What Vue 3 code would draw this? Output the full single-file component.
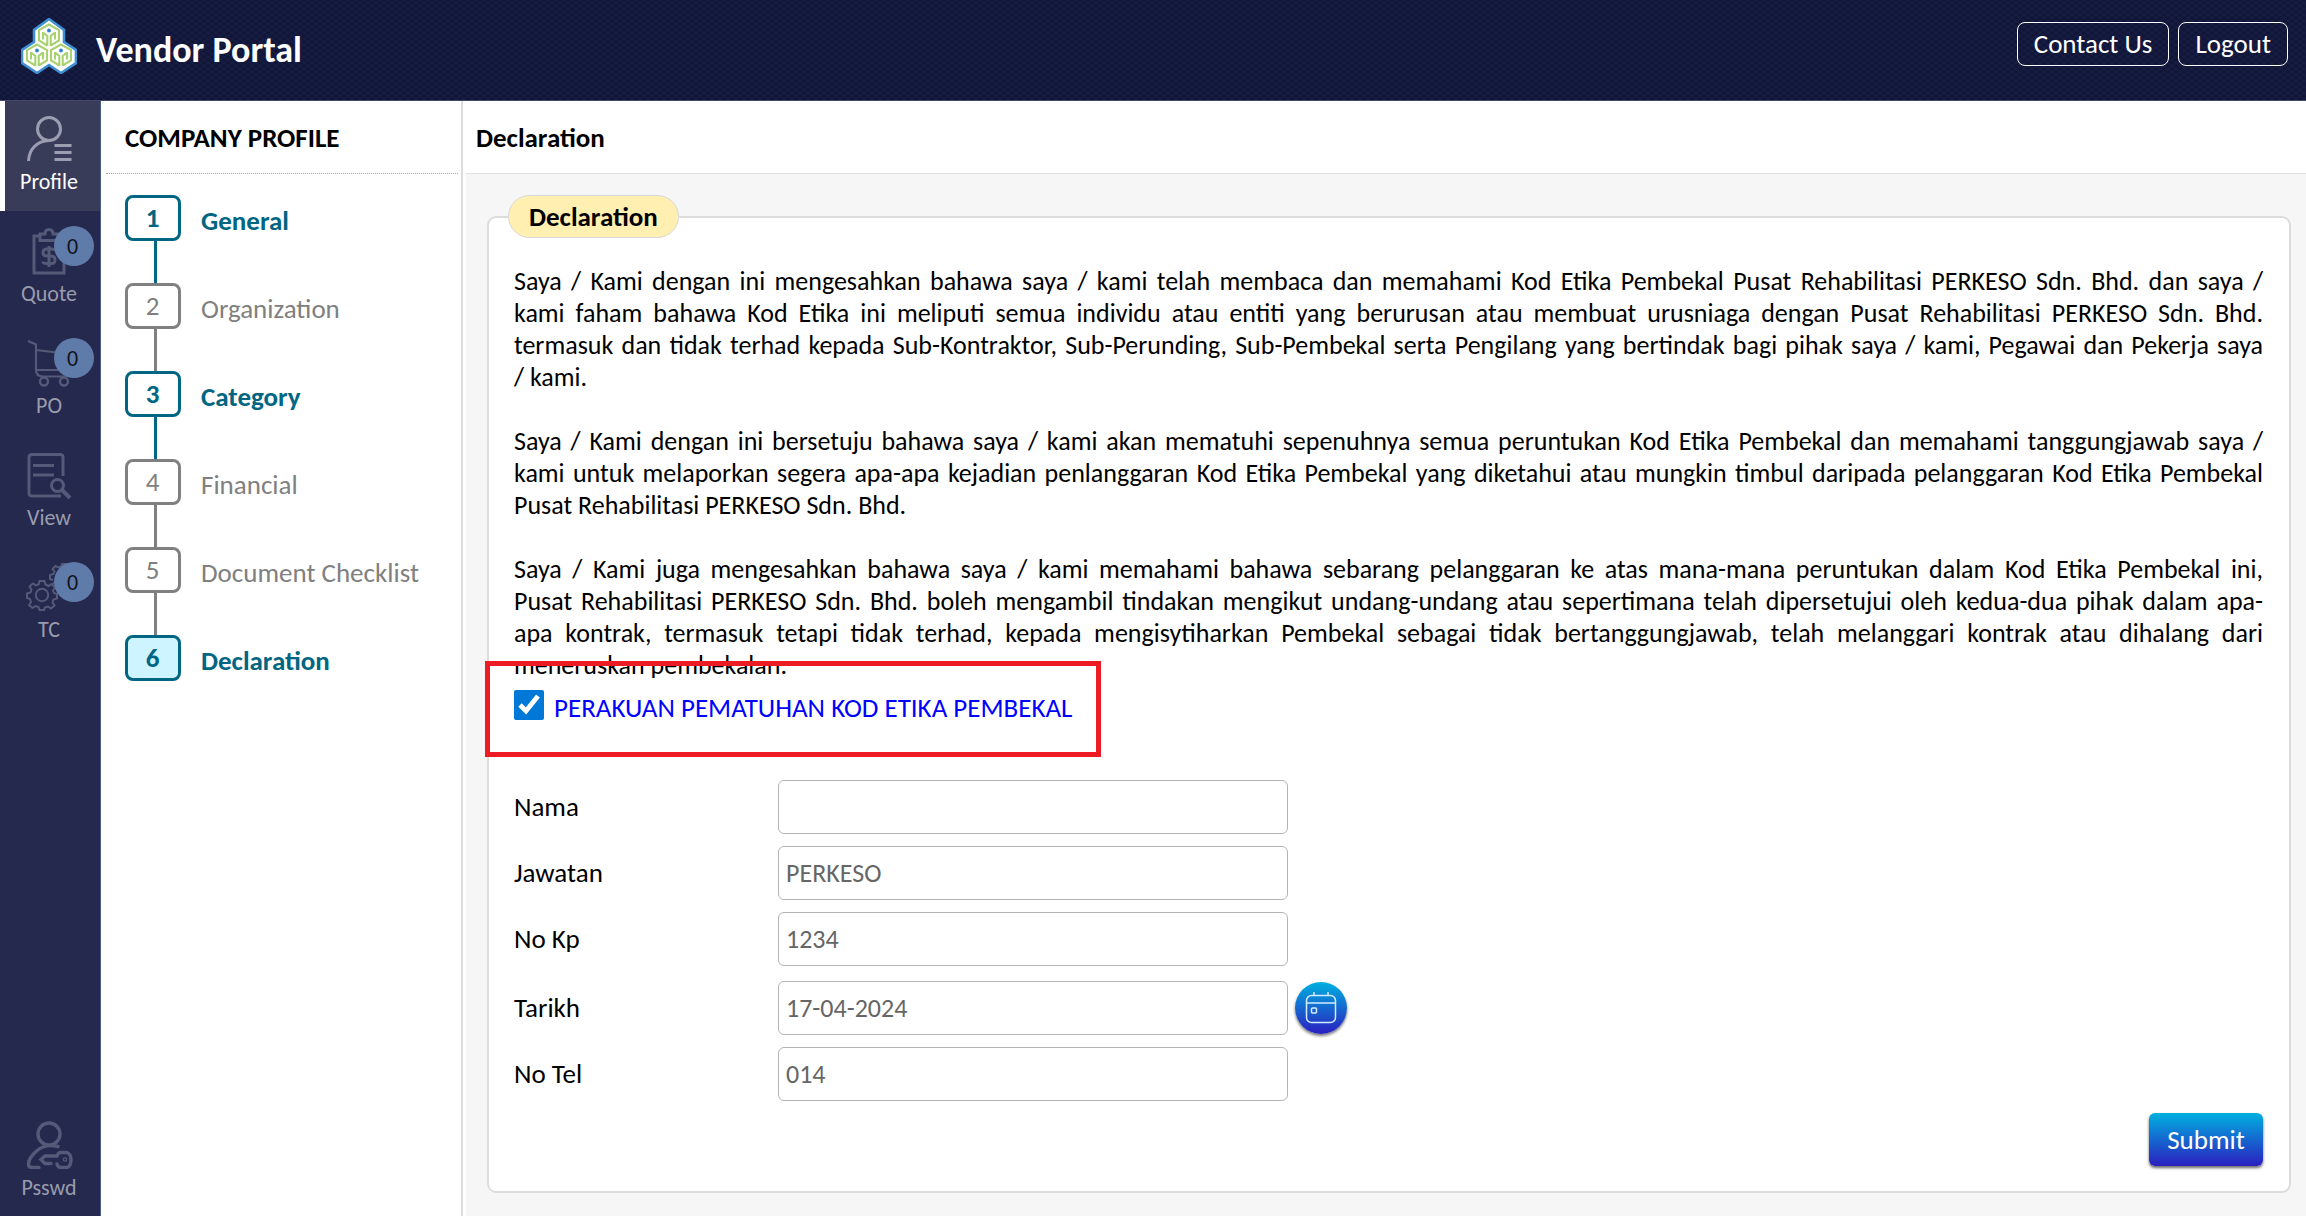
<script setup>
import { ref } from 'vue'

const navItems = [
  { id: 'profile', label: 'Profile', active: true },
  { id: 'quote', label: 'Quote', badge: 0 },
  { id: 'po', label: 'PO', badge: 0 },
  { id: 'view', label: 'View' },
  { id: 'tc', label: 'TC', badge: 0 }
]

const steps = [
  { n: 1, label: 'General', state: 'done' },
  { n: 2, label: 'Organization', state: '' },
  { n: 3, label: 'Category', state: 'done' },
  { n: 4, label: 'Financial', state: '' },
  { n: 5, label: 'Document Checklist', state: '' },
  { n: 6, label: 'Declaration', state: 'done current' }
]

// \u00a0 keeps word pairs together when the text wraps
const paragraphs = [
  'Saya / Kami dengan ini mengesahkan bahawa saya / kami telah membaca dan memahami Kod Etika Pembekal Pusat Rehabilitasi PERKESO Sdn. Bhd. dan saya / kami\u00a0faham bahawa Kod Etika ini meliputi semua individu atau entiti yang berurusan atau membuat urusniaga dengan Pusat Rehabilitasi PERKESO Sdn. Bhd. termasuk\u00a0dan tidak terhad kepada Sub-Kontraktor, Sub-Perunding, Sub-Pembekal serta Pengilang yang bertindak bagi pihak saya / kami, Pegawai dan Pekerja saya /\u00a0kami.',
  'Saya / Kami dengan ini bersetuju bahawa saya / kami akan mematuhi sepenuhnya semua peruntukan Kod Etika Pembekal dan memahami tanggungjawab saya / kami\u00a0untuk melaporkan segera apa-apa kejadian penlanggaran Kod Etika Pembekal yang diketahui atau mungkin timbul daripada pelanggaran Kod Etika Pembekal Pusat\u00a0Rehabilitasi PERKESO Sdn. Bhd.',
  'Saya / Kami juga mengesahkan bahawa saya / kami memahami bahawa sebarang pelanggaran ke atas mana-mana peruntukan dalam Kod Etika Pembekal ini, Pusat\u00a0Rehabilitasi PERKESO Sdn. Bhd. boleh mengambil tindakan mengikut undang-undang atau sepertimana telah dipersetujui oleh kedua-dua pihak dalam apa-apa\u00a0kontrak, termasuk tetapi tidak terhad, kepada mengisytiharkan Pembekal sebagai tidak bertanggungjawab, telah melanggari kontrak atau dihalang dari meneruskan\u00a0pembekalan.'
]

const agreed = ref(true)
const fields = ref([
  { id: 'nama', label: 'Nama', value: '' },
  { id: 'jawatan', label: 'Jawatan', value: 'PERKESO' },
  { id: 'nokp', label: 'No Kp', value: '1234' },
  { id: 'tarikh', label: 'Tarikh', value: '17-04-2024', date: true },
  { id: 'notel', label: 'No Tel', value: '014' }
])
</script>

<template>
  <div class="app">
    <header class="topbar">
      <svg class="logo" viewBox="0 0 56 56" aria-hidden="true">
        <path d="M28 1 43 12V24L55 32V45L40 55 28 47 16 55 1 45V32L13 24V12Z" fill="#fff" stroke="#3f90d2" stroke-width="2.6" />
        <g v-for="(p, i) in [[28, 17], [16, 37], [40, 37]]" :key="i" :transform="`translate(${p[0]} ${p[1]})`" fill="none" stroke="#a9d170" stroke-width="2.1">
          <path d="M-1.7 11V1L-6 -2.5M1.7 11V1L6 -2.5M-1.7 10.5-10 5.5V-5L0 -10.5 10 -5V5.5L1.7 10.5M-6 -3V4.5M6 -3V4.5" />
          <circle cy="-4.5" r="1.9" fill="#2f86cc" stroke="none" />
        </g>
      </svg>
      <h1>Vendor Portal</h1>
      <button type="button" class="outline">Contact Us</button>
      <button type="button" class="outline">Logout</button>
    </header>

    <div class="body">
      <nav class="rail">
        <a v-for="item in navItems" :key="item.id" href="#" class="rail-item" :class="{ active: item.active }">
          <svg viewBox="0 0 48 48" fill="none" stroke="currentColor" stroke-width="3">
            <template v-if="item.id === 'profile'">
              <circle cx="24" cy="14" r="11.5" />
              <path d="M3.500 46C4 34 12 26 24 25.500M29.500 30.500H46.500M29.500 37.500H46.500M29.500 44.500H46.500" />
            </template>
            <template v-else-if="item.id === 'quote'">
              <path d="M14 9H9V46H39V9H34M15 13.500V7H20Q20 2.500 24 2.500T28 7H33V13.500Z" />
              <path d="M30 24Q30 22 26 22H22Q18 22 18 25.500T22 29H26Q30 29 30 33T26 36.500H22Q18 36.500 18 34.500M24 19V40" />
            </template>
            <template v-else-if="item.id === 'po'">
              <path d="M3 2 11 5.500V31Q11 37.500 18 37.500H42M11 11 44 15 41 31H11" stroke-width="2.200" />
              <circle cx="19" cy="42.500" r="4" stroke-width="2.400" />
              <circle cx="39" cy="42.500" r="4" stroke-width="2.400" />
            </template>
            <template v-else-if="item.id === 'view'">
              <path d="M38 25V6Q38 3.500 35 3.500H7Q4 3.500 4 6.500V42Q4 45 7 45H36M8 14.500H29M8 24H29" />
              <circle cx="32.500" cy="34.500" r="6" />
              <path d="M37 39 45 47" stroke-width="4" />
            </template>
            <template v-else>
              <g stroke-width="2">
                <circle cx="17" cy="32" r="6.200" />
                <path d="M14.500 18H19.500L20.500 21.500 23.500 23 26.500 21 30 24.500 28 27.500 29 30 32 31V35.500L28.500 36.500 27.500 39.500 29.500 42.500 26 45.500 23 43.500 20 44.500 19 47H14.500L13.500 44 10.500 43 7.500 45 4 42 6 39 5 36 2 35V30.500L5.500 29.500 6.500 26.500 4.500 23.500 8 20.500 11 22.500 13.500 21.500Z" />
                <path d="M31 24 33 22M28 17 25 16V12L28.500 11 29.500 8.500 27.500 6 30.500 3 33.500 4.500 36 3.500 37 1H41L42 4M30 19 28 21M34 8Q30 14 34 19" />
              </g>
            </template>
          </svg>
          <span>{{ item.label }}</span>
          <b v-if="item.badge !== undefined" class="badge">{{ item.badge }}</b>
        </a>
        <a href="#" class="rail-item last">
          <svg viewBox="0 0 48 48" fill="none" stroke="currentColor" stroke-width="3.400" stroke-linecap="round">
            <circle cx="24" cy="13" r="11" />
            <path d="M33 25.500Q20 22.500 11.500 30 3.500 37 3.500 43 3.500 46.500 7 46.500H14" />
            <path d="M26 42.500H20L16 38.500 20 35H32Q33 31.500 36 31.500H42Q46 33 46 39T42 46.500H36Q33 46.500 32 43" />
            <circle cx="40" cy="38.500" r="0.600" />
          </svg>
          <span>Psswd</span>
        </a>
      </nav>

      <aside class="panel">
        <h2>COMPANY PROFILE</h2>
        <ol class="steps">
          <li v-for="s in steps" :key="s.n" :class="s.state">
            <span class="num">{{ s.n }}</span>
            <a href="#">{{ s.label }}</a>
          </li>
        </ol>
      </aside>

      <main class="content">
        <h2>Declaration</h2>
        <form @submit.prevent>
          <fieldset>
            <legend>Declaration</legend>
            <p v-for="(p, i) in paragraphs" :key="i">{{ p }}</p>
            <div class="agree">
              <input id="agree" v-model="agreed" type="checkbox" />
              <label for="agree">PERAKUAN PEMATUHAN KOD ETIKA PEMBEKAL</label>
              <div class="highlight"></div>
            </div>
            <div v-for="f in fields" :key="f.id" class="field" :class="{ date: f.date }">
              <label :for="f.id">{{ f.label }}</label>
              <input :id="f.id" v-model="f.value" type="text" />
              <button v-if="f.date" type="button" class="calendar" aria-label="Pilih tarikh">
                <svg viewBox="0 0 32 32" fill="none" stroke="#d3ecff" stroke-width="1.500">
                  <rect x="1.500" y="3.500" width="29" height="27" rx="5" />
                  <path d="M1.500 11H30.500M9 0V4M23 0V4" />
                  <rect x="6.500" y="16" width="5" height="5" rx="1" />
                </svg>
              </button>
            </div>
            <div class="actions">
              <button type="submit" class="submit">Submit</button>
            </div>
          </fieldset>
        </form>
      </main>
    </div>
  </div>
</template>

<style>
body {
  background: #f6f6f6;
}
</style>

<style scoped>
* {
  box-sizing: border-box;
}
.app {
  min-height: 100vh;
  display: flex;
  flex-direction: column;
  font-family: Carlito, Calibri, Lato, sans-serif;
  font-size: 27px;
  line-height: 32px;
  color: #000;
}
h1,
h2,
p,
ol {
  margin: 0;
}
a {
  color: inherit;
  text-decoration: none;
}
button,
input {
  font: inherit;
}
.topbar {
  display: flex;
  align-items: flex-start;
  gap: 9px;
  height: 101px;
  padding: 18px 18px 0 21px;
  border-bottom: 1px solid #454868;
  background-color: #191f47;
  background-image: radial-gradient(ellipse at center, #0f1435 10%, transparent 70%), radial-gradient(ellipse at center, #0f1435 10%, transparent 70%);
  background-size: 8px 6px;
  background-position: 0 0, 4px 3px;
  color: #fff;
}
.logo {
  width: 56px;
  height: 56px;
  margin-right: 10px;
}
.topbar h1 {
  flex: 1;
  font-size: 36px;
  line-height: 64px;
}
.outline {
  height: 44px;
  margin-top: 4px;
  padding: 0 16px;
  border: 1px solid #fff;
  border-radius: 8px;
  background: transparent;
  color: #fff;
}
.body {
  flex: 1;
  display: flex;
}
.rail {
  width: 101px;
  display: flex;
  flex-direction: column;
  gap: 2px;
  background: #24294d;
  border-right: 1px solid #4a5f85;
  font-size: 22px;
}
.rail-item {
  position: relative;
  display: flex;
  flex-direction: column;
  align-items: center;
  height: 110px;
  padding: 14px 2px 0 0;
  line-height: 38px;
  color: #9a9cad;
}
.rail-item svg {
  width: 48px;
  height: 48px;
  color: #555a78;
}
.rail-item.active {
  border-left: 5px solid #fff;
  padding-right: 7px;
  background: #393c59;
  color: #fff;
}
.rail-item.active svg {
  color: #9c9db0;
}
.rail-item.last {
  margin-top: auto;
}
.badge {
  position: absolute;
  top: 13px;
  right: 6px;
  width: 40px;
  height: 40px;
  padding-right: 3px;
  border-radius: 50%;
  background: #5f7ba9;
  color: #10131c;
  font-size: 22px;
  font-weight: 400;
  line-height: 42px;
  text-align: center;
}
.panel {
  width: 362px;
  background: #fff;
  border-right: 2px solid #dcdcdc;
}
.panel h2 {
  margin: 0 3px 0 5px;
  padding: 21px 19px 19px;
  border-bottom: 1px dotted #a8a8a8;
  font-size: 27px;
}
.steps {
  padding: 21px 0 0 24px;
  list-style: none;
}
.steps li {
  position: relative;
  display: flex;
  align-items: flex-start;
  gap: 20px;
  height: 88px;
  color: #808080;
}
.steps li:not(:last-child)::after {
  content: '';
  position: absolute;
  top: 46px;
  left: 29px;
  width: 3px;
  height: 42px;
  background: currentColor;
}
.steps a {
  line-height: 52px;
}
.num {
  width: 56px;
  height: 46px;
  padding-right: 1px;
  border: 3px solid currentColor;
  border-radius: 8px;
  line-height: 40px;
  text-align: center;
}
.done {
  font-weight: 700;
}
.steps li.done {
  color: #006682;
}
.current .num {
  background: #cdf4ff;
}
.content {
  flex: 1;
  min-width: 0;
  border-left: 3px solid #fff;
}
.content h2 {
  padding: 21px 10px 19px;
  background: #fff;
  border-bottom: 1px solid #e0e0e0;
  font-size: 27px;
}
form {
  padding: 21px 15px 24px 21px;
}
fieldset {
  margin: 0;
  padding: 27px 26px 25px 25px;
  min-width: 0;
  border: 2px solid #dcdcdc;
  border-radius: 9px;
  background: #fff;
}
legend {
  margin-left: -6px;
  padding: 0 20px;
  border: 1px solid #d8d8d8;
  border-radius: 22px;
  background: #ffefb0;
  font-weight: 700;
  line-height: 41px;
}
p {
  font-size: 26px;
  text-align: justify;
}
p + p {
  margin-top: 32px;
}
.agree {
  position: relative;
  display: flex;
  gap: 10px;
  height: 99px;
  padding-top: 9px;
  color: #00f;
}
.agree input {
  width: 30px;
  height: 30px;
  margin: 0;
  accent-color: #0078d7;
}
.agree label {
  line-height: 36px;
}
.highlight {
  position: absolute;
  top: -20px;
  left: -29px;
  width: 616px;
  height: 96px;
  border: 5px solid #ed1c24;
  pointer-events: none;
}
.field {
  display: flex;
  align-items: center;
  margin-bottom: 12px;
}
.field.date {
  margin-top: 15px;
}
.field label {
  width: 264px;
}
.field input {
  width: 510px;
  height: 54px;
  padding: 0 7px;
  border: 1px solid #b4b4b4;
  border-radius: 6px;
  background: #fff;
  color: #666;
  font-size: 26px;
}
.calendar {
  display: grid;
  place-items: center;
  width: 52px;
  height: 52px;
  margin-left: 7px;
  padding: 0;
  border: 0;
  border-radius: 50%;
  background: linear-gradient(#00b0e0, #2a1fbf);
  box-shadow: 0 2px 3px #0008;
}
.calendar svg {
  width: 32px;
  height: 32px;
}
.actions {
  display: flex;
  justify-content: flex-end;
}
.submit {
  width: 114px;
  height: 53px;
  padding: 0;
  border: 0;
  border-radius: 6px;
  background: linear-gradient(#00b0e0, #2a1fbf);
  box-shadow: 0 2px 3px #0009;
  color: #fff;
}
</style>
